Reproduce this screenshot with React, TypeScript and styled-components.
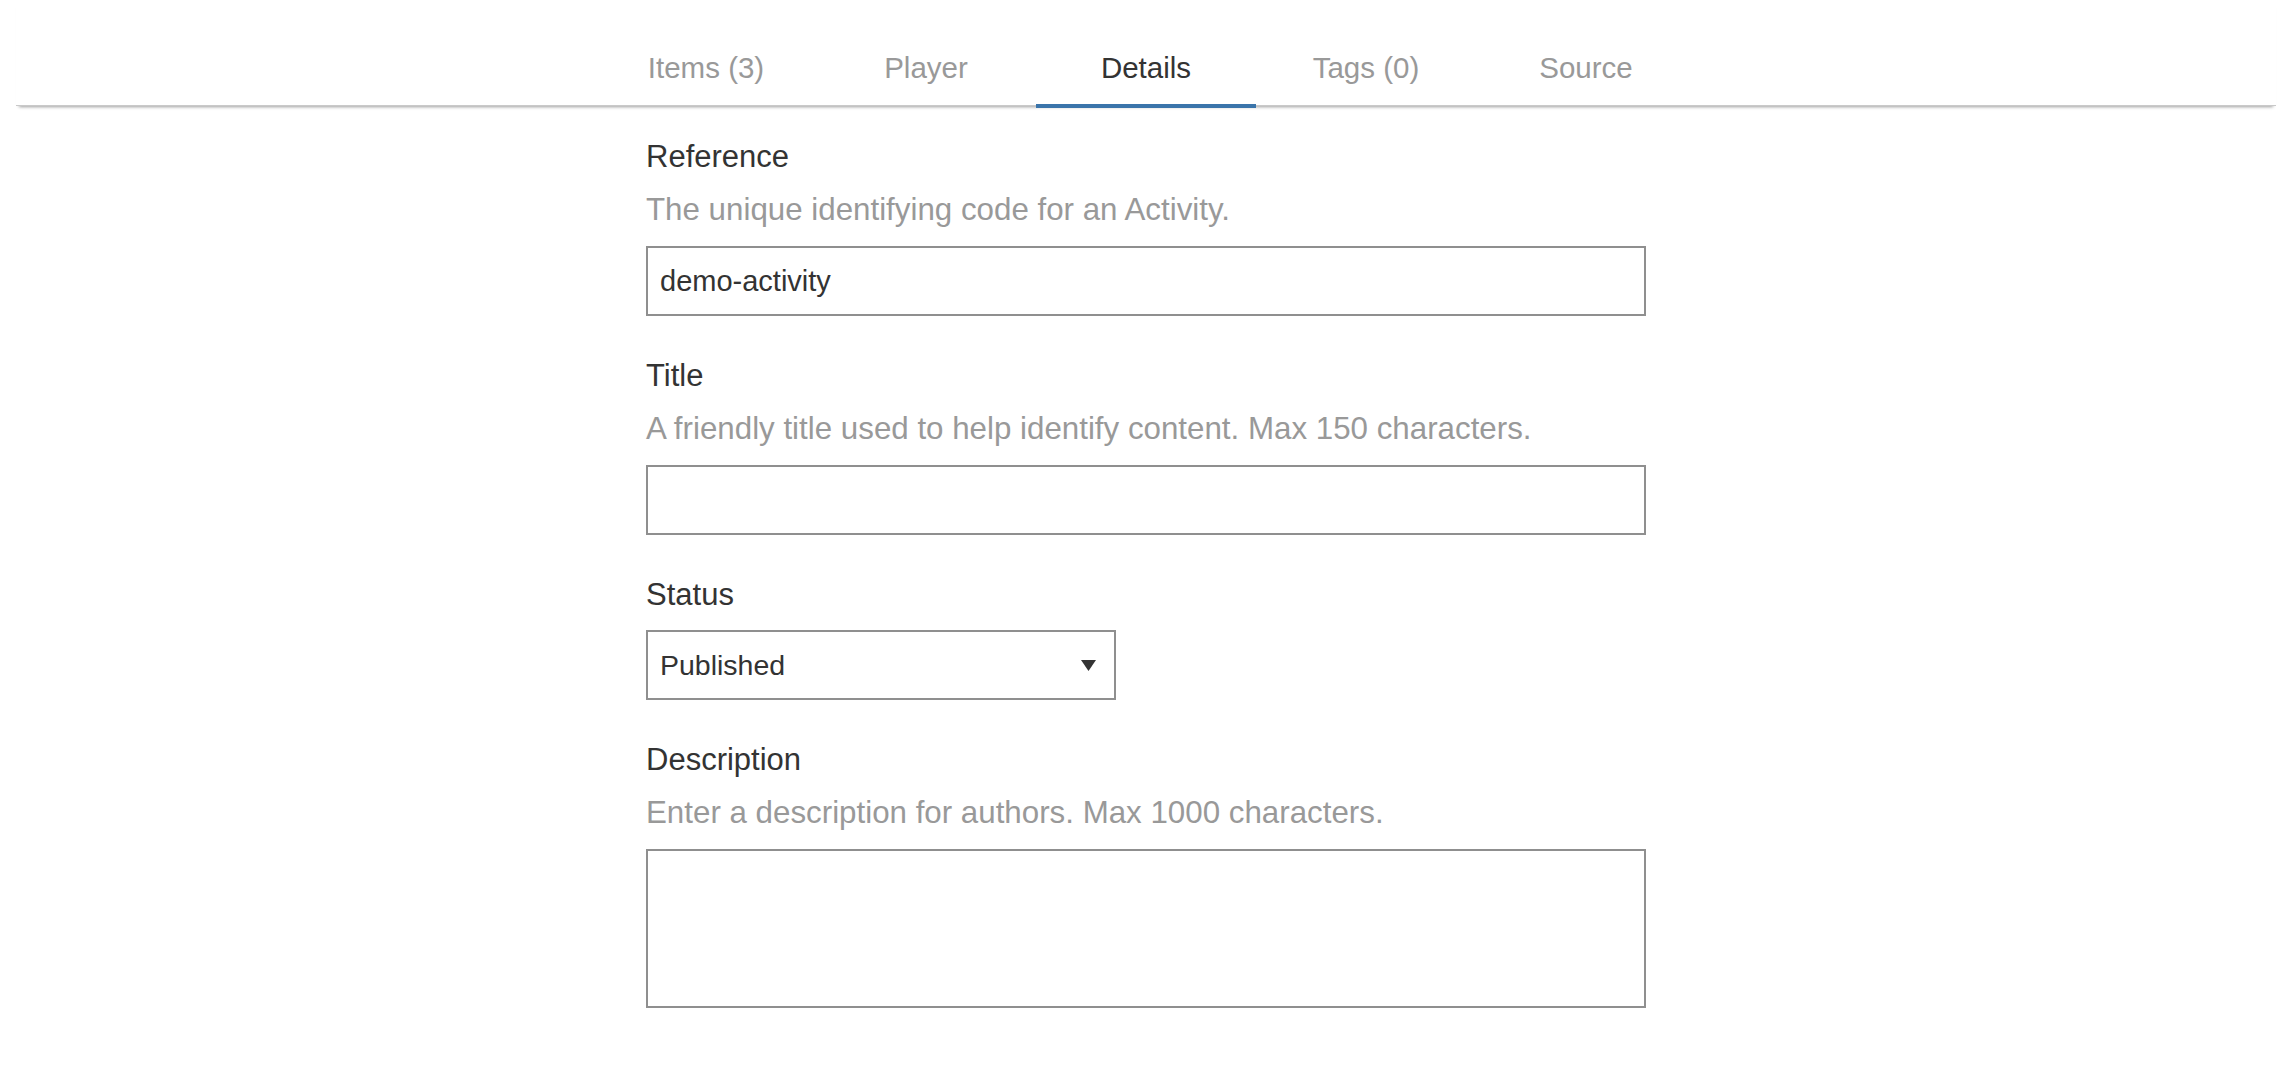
import React from "react";
import styled, { createGlobalStyle } from "styled-components";

const GlobalStyle = createGlobalStyle`
  html, body {
    margin: 0;
    padding: 0;
    background: #ffffff;
  }
  body {
    font-family: "Liberation Sans", Arial, Helvetica, sans-serif;
    color: #333333;
  }
  * { box-sizing: border-box; }
`;

const Page = styled.div`
  padding: 0 16px 40px;
`;

const TabBar = styled.nav`
  display: flex;
  justify-content: center;
  background: #ffffff;
  border-bottom: 1px solid #c9c9c9;
  box-shadow: 0 4px 3px -3px rgba(0, 0, 0, 0.38);
`;

const Tab = styled.div<{ $active?: boolean }>`
  width: 220px;
  padding: 50px 0 18px;
  line-height: 36px;
  font-size: 29.5px;
  text-align: center;
  color: ${(p) => (p.$active ? "#333333" : "#999999")};
  border-bottom: 4px solid ${(p) => (p.$active ? "#3a74aa" : "transparent")};
  margin-bottom: -3px;
  position: relative;
  cursor: pointer;
`;

const Form = styled.form`
  width: 1000px;
  margin: 33px auto 0;
  display: flex;
  flex-direction: column;
`;

const Field = styled.div`
  display: flex;
  flex-direction: column;
  align-items: flex-start;
  margin-bottom: 42px;
`;

const Label = styled.label`
  font-size: 31px;
  line-height: 36px;
  color: #333333;
  margin-bottom: 17px;
`;

const Hint = styled.p`
  margin: 0 0 18px;
  font-size: 31.3px;
  line-height: 36px;
  color: #999999;
`;

const TextInput = styled.input`
  width: 100%;
  height: 70px;
  border: 2px solid #8f8f8f;
  border-radius: 0;
  padding: 0 12px;
  font-family: "Liberation Sans", Arial, sans-serif;
  font-size: 29px;
  color: #333333;
  background: #ffffff;
  outline: none;
`;

const SelectBox = styled.div`
  position: relative;
  width: 470px;
  height: 70px;
  border: 2px solid #8f8f8f;
  display: flex;
  align-items: center;
  padding: 0 12px;
  font-size: 28.5px;
  color: #333333;
  background: #ffffff;
`;

const SelectValue = styled.span`
  flex: 1;
`;

const Caret = styled.svg`
  width: 15px;
  height: 11px;
  margin-right: 6px;
  fill: #333333;
`;

const TextArea = styled.textarea`
  width: 100%;
  height: 159px;
  border: 2px solid #8f8f8f;
  border-radius: 0;
  padding: 10px 12px;
  font-family: "Liberation Sans", Arial, sans-serif;
  font-size: 29px;
  color: #333333;
  resize: none;
  outline: none;
  display: block;
`;

const tabs = ["Items (3)", "Player", "Details", "Tags (0)", "Source"];

export default function App() {
  return (
    <Page>
      <GlobalStyle />
      <TabBar>
        {tabs.map((t) => (
          <Tab key={t} $active={t === "Details"}>
            {t}
          </Tab>
        ))}
      </TabBar>
      <Form onSubmit={(e) => e.preventDefault()}>
        <Field>
          <Label>Reference</Label>
          <Hint>The unique identifying code for an Activity.</Hint>
          <TextInput defaultValue="demo-activity" />
        </Field>
        <Field>
          <Label>Title</Label>
          <Hint>A friendly title used to help identify content. Max 150 characters.</Hint>
          <TextInput defaultValue="" />
        </Field>
        <Field>
          <Label>Status</Label>
          <SelectBox>
            <SelectValue>Published</SelectValue>
            <Caret viewBox="0 0 15 11">
              <polygon points="0,0 15,0 7.5,11" />
            </Caret>
          </SelectBox>
        </Field>
        <Field>
          <Label>Description</Label>
          <Hint>Enter a description for authors. Max 1000 characters.</Hint>
          <TextArea />
        </Field>
      </Form>
    </Page>
  );
}
